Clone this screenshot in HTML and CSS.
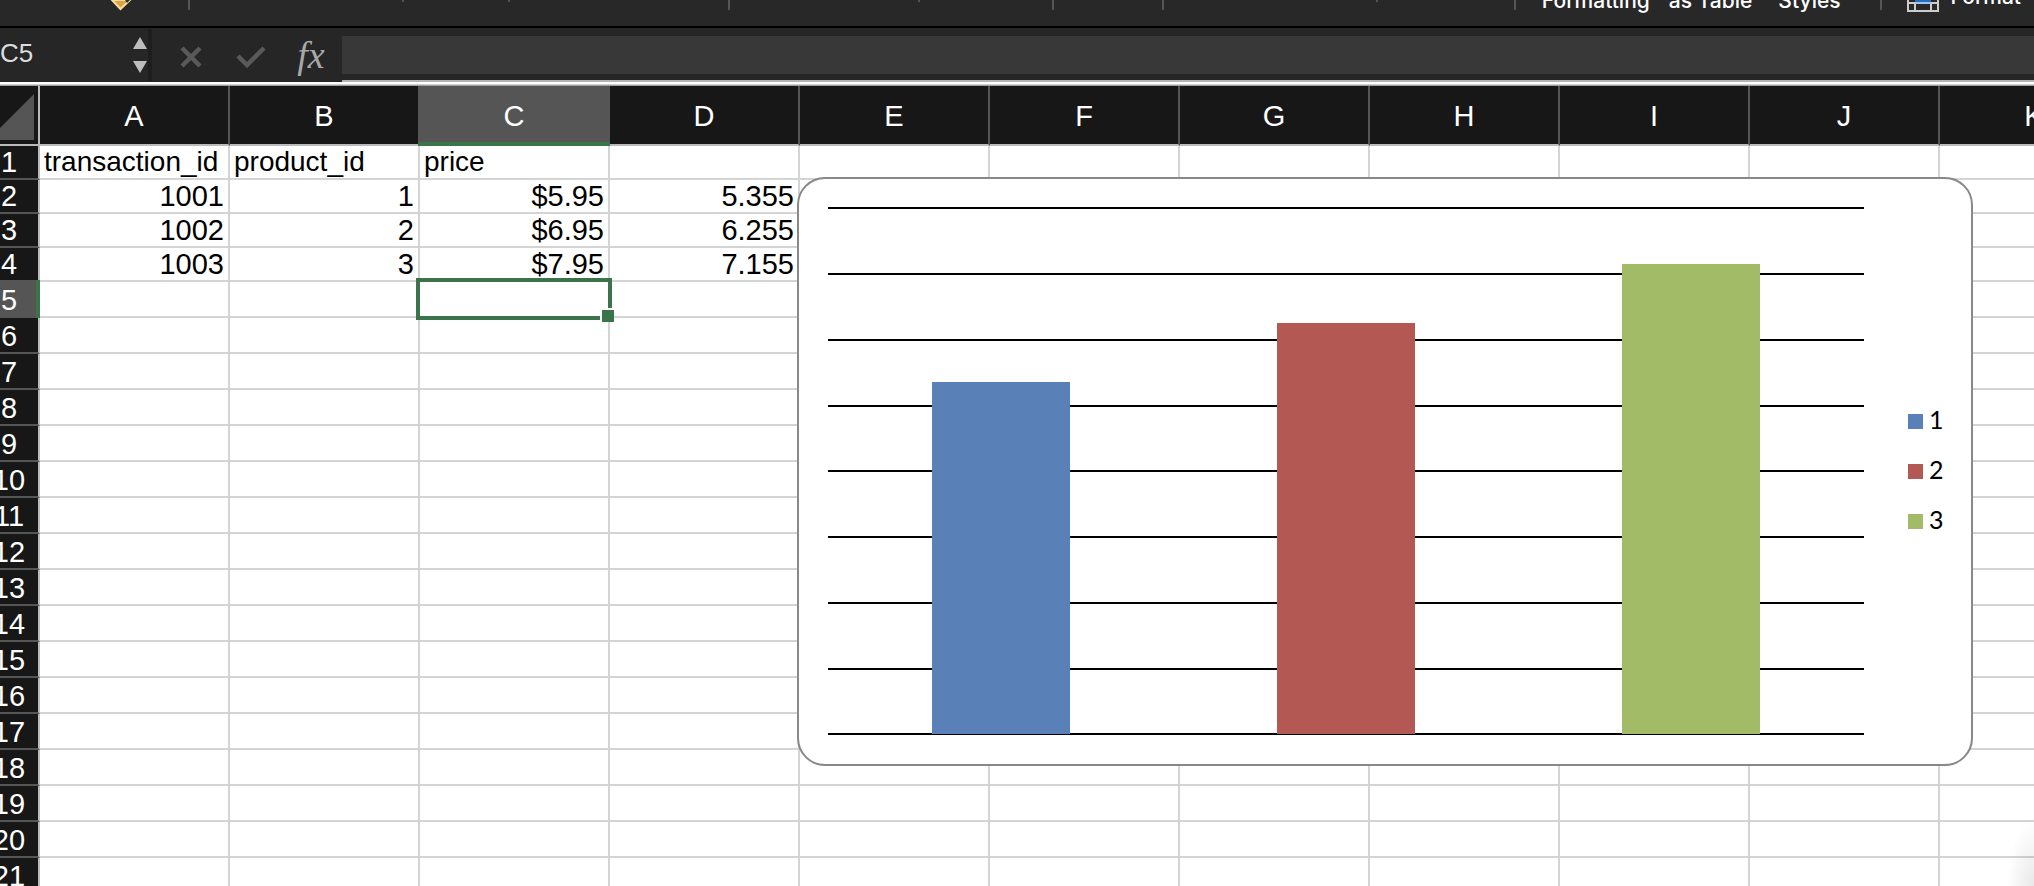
FILE: index.html
```html
<!DOCTYPE html>
<html lang="en">
<head>
<meta charset="utf-8">
<title>Workbook</title>
<link rel="stylesheet" href="styles.css">
</head>
<body>
<div class="ribbon">
  <svg class="ribbon-marks" width="1200" height="26" viewBox="0 0 1200 26" aria-hidden="true">
    <path d="M112 0L120.500 9L130 0Z" fill="#e0a044" stroke="#f8dfa0" stroke-width="2"/>
    <path d="M125 0h5l-3 3z" fill="#333"/>
    <g fill="#555"><path d="M188 0h2v10h-2zM402 0h2v2h-2zM508 0h2v2h-2zM728 0h2v10h-2zM918 0h2v2h-2zM1052 0h2v10h-2zM1162 0h2v10h-2zM1376 0h2v2h-2z"/></g>
  </svg>
  <div class="ribbon-labels">
    <i class="rule"></i>
    <button class="rb formatting">Formatting</button>
    <button class="rb as-table">as Table</button>
    <button class="rb styles">Styles</button>
    <i class="rule"></i>
    <button class="rb format">
      <svg width="32" height="12" viewBox="0 0 32 12" aria-hidden="true"><path d="M8 0h16v2H8z" fill="#2d69bd"/><path d="M8 2h16v2H8z" fill="#9cc3ee"/><path d="M1 0v11h30V0M1 3h7M24 3h7M8 4v7M24 4v7" fill="none" stroke="#ccc" stroke-width="2"/></svg>
      <span>Format</span>
    </button>
  </div>
</div>
<div class="formula-bar">
  <div class="name-box">
    <input class="name-input" value="C5" aria-label="Name box">
    <svg width="14" height="36" viewBox="0 0 14 36" aria-hidden="true"><path d="M7 0l7 12H0zM0 24h14L7 36z" fill="#bdbdbd"/></svg>
  </div>
  <button class="fx-btn" aria-label="Cancel"><svg width="22" height="22" viewBox="0 0 22 22"><path d="M2 2L20 20M20 2L2 20" stroke="#595959" stroke-width="4.500"/></svg></button>
  <button class="fx-btn check" aria-label="Enter"><svg width="30" height="22" viewBox="0 0 30 22"><path d="M2 10L11 19L28 2" fill="none" stroke="#595959" stroke-width="4.500"/></svg></button>
  <button class="fx-btn fx" aria-label="Insert function">fx</button>
  <div class="formula-field"><input class="formula-input" aria-label="Formula"></div>
</div>
<div class="divider"></div>
<main class="sheet">
  <table class="grid">
    <colgroup><col class="c-head"><col span="11" class="c-data"></colgroup>
    <thead><tr><th class="corner"><svg width="46" height="46" viewBox="0 0 46 46" aria-hidden="true"><path d="M46 0v46H0z" fill="#555"/></svg></th><th>A</th><th>B</th><th class="active">C</th><th>D</th><th>E</th><th>F</th><th>G</th><th>H</th><th>I</th><th>J</th><th>K</th></tr></thead>
    <tbody id="rows"></tbody>
  </table>
  <figure class="chart">
    <svg class="plot" viewBox="0 0 1036 528" aria-label="Bar chart of 5.355, 6.255 and 7.155">
      <path d="M0 1H1036M0 67H1036M0 133H1036M0 199H1036M0 264H1036M0 330H1036M0 396H1036M0 462H1036M0 527H1036" stroke="#000" stroke-width="2"/>
      <path d="M104 175h138v352h-138z" fill="#5981b7"/>
      <path d="M449 116h138v411h-138z" fill="#b35852"/>
      <path d="M794 57h138v470h-138z" fill="#a1bb66"/>
    </svg>
    <ul class="legend"><li class="s1">1</li><li class="s2">2</li><li class="s3">3</li></ul>
  </figure>
  <div class="corner-shade"></div>
</main>
<script src="sheet.js"></script>
</body>
</html>
```
FILE: styles.css
```css
* { box-sizing: border-box; }
html, body { height: 100%; }
body {
  margin: 0;
  overflow: hidden;
  display: flex;
  flex-direction: column;
  background: #fff;
  font-family: "Liberation Sans", Arial, sans-serif;
}
button, input { font: inherit; border: 0; padding: 0; background: none; color: inherit; }

.ribbon {
  flex: none;
  display: flex;
  justify-content: space-between;
  height: 28px;
  background: #282828;
  border-bottom: 2px solid #000;
  overflow: hidden;
}
.ribbon-marks { flex: none; overflow: visible; }
.ribbon-labels { display: flex; align-items: flex-start; color: #fff; }
.rule { width: 2px; height: 10px; background: #555; }
.rb { font: 500 21px/24px Inter, sans-serif; margin-top: -11px; white-space: nowrap; }
.formatting { margin-left: 26px; }
.as-table { margin-left: 19px; }
.styles { margin-left: 26px; margin-right: 39px; }
.format { display: flex; margin-left: 25px; margin-right: 13px; margin-top: 0; gap: 12px; }
.format span { margin-top: -15px; }

.formula-bar {
  flex: none;
  display: flex;
  align-items: center;
  height: 54px;
  background: #262626;
}
.name-box {
  display: flex;
  align-items: center;
  justify-content: space-between;
  width: 152px;
  height: 52px;
  padding-right: 1px;
  border-right: 4px solid #1e1e1e;
}
.name-input { width: 110px; height: 32px; margin-bottom: 4px; font-size: 26px; color: #ddd; }
.fx-btn { display: flex; justify-content: center; width: 22px; margin: 4px 0 0 28px; }
.check { width: 30px; margin-left: 34px; }
.fx { width: 32px; margin: 0 0 0 29px; font: italic 38px/34px "Liberation Serif", serif; color: #a8a8a8; }
.formula-field {
  flex: 1;
  align-self: stretch;
  margin-left: 15px;
  padding-top: 8px;
  border-bottom: 2px solid #b5b5b5;
}
.formula-input { display: block; width: 100%; height: 38px; background: #383838; color: #fff; font-size: 24px; }
.divider {
  flex: none;
  height: 4px;
  background: linear-gradient(#fff 50%, #d0d0d0 50%, #d0d0d0 75%, #a0a0a0 75%);
}

.sheet { flex: 1; position: relative; overflow: hidden; min-height: 0; }
.grid {
  width: 2150px;
  margin-left: -20px;
  table-layout: fixed;
  border-collapse: separate;
  border-spacing: 0;
  font-size: 29px;
  line-height: 32px;
}
.c-head { width: 60px; }
.c-data { width: 190px; }
.grid th {
  position: relative;
  padding: 2px 0 0;
  background: #171717;
  color: #fff;
  font-weight: 400;
  border-right: 2px solid #555;
}
.grid thead th { height: 60px; border-bottom: 2px solid #bbb; }
.grid tbody th { border-right-color: #bbb; border-bottom: 2px solid #555; }
.grid .corner { border-right-color: #bbb; text-align: right; vertical-align: bottom; padding: 0 4px 4px 0; }
.corner svg { display: block; margin-left: auto; }
.grid td {
  position: relative;
  height: 36px;
  padding: 0 4px;
  border-right: 2px solid #d4d4d4;
  border-bottom: 2px solid #d4d4d4;
  text-align: right;
  white-space: nowrap;
  color: #000;
}
.grid .filled td { height: 34px; }
.grid .filled th { height: 34px; padding-top: 0; }
.grid .label { text-align: left; font-size: 28px; }
.grid th.active { background: #555; }
thead .active::after {
  content: "";
  position: absolute;
  z-index: 1;
  left: -2px; right: -2px; bottom: -2px;
  height: 4px;
  background: #3b734a;
}
tbody .active::after {
  content: "";
  position: absolute;
  z-index: 1;
  top: -2px; right: -2px; bottom: -2px;
  width: 4px;
  background: #3b734a;
}
.selected::before {
  content: "";
  position: absolute;
  z-index: 1;
  inset: -4px;
  border: 4px solid #3b734a;
}
.selected::after {
  content: "";
  position: absolute;
  z-index: 1;
  right: -6px; bottom: -6px;
  width: 12px; height: 12px;
  border: solid #fff;
  border-width: 2px 0 0 2px;
  background: #3b734a;
}

.chart {
  position: absolute;
  left: 797px; top: 91px;
  display: flex;
  align-items: flex-start;
  width: 1176px;
  height: 589px;
  margin: 0;
  padding: 28px 48px 0 29px;
  background: #fff;
  border: 2px solid #888;
  border-radius: 28px;
}
.plot { width: 1036px; height: 528px; flex: none; }
.legend { list-style: none; align-self: center; margin: 0 0 34px 44px; padding: 0; font: 25px/50px Lato, sans-serif; }
.legend li { display: flex; align-items: center; gap: 6px; height: 50px; }
.legend li::before { content: ""; width: 15px; height: 15px; margin-top: 6px; background: #5981b7; }
.legend .s2::before { background: #b35852; }
.legend .s3::before { background: #a1bb66; }

.corner-shade {
  position: absolute;
  right: 0; bottom: 0;
  width: 28px; height: 66px;
  background: radial-gradient(ellipse at 100% 100%, rgba(0,0,0,.09), rgba(0,0,0,0) 70%);
}
```
FILE: sheet.js
```js
const data = [
  ["transaction_id", "product_id", "price"],
  ["1001", "1", "$5.95", "5.355"],
  ["1002", "2", "$6.95", "6.255"],
  ["1003", "3", "$7.95", "7.155"]
];
const body = document.getElementById("rows");
for (let r = 0; r < 21; r++) {
  const tr = body.insertRow();
  if (data[r]) tr.className = "filled";
  const th = document.createElement("th");
  th.textContent = r + 1;
  if (r === 4) th.className = "active";
  tr.append(th);
  for (let c = 0; c < 11; c++) {
    const td = tr.insertCell();
    td.textContent = (data[r] && data[r][c]) || "";
    if (r === 0) td.className = "label";
    if (r === 4 && c === 2) td.className = "selected";
  }
}
```
